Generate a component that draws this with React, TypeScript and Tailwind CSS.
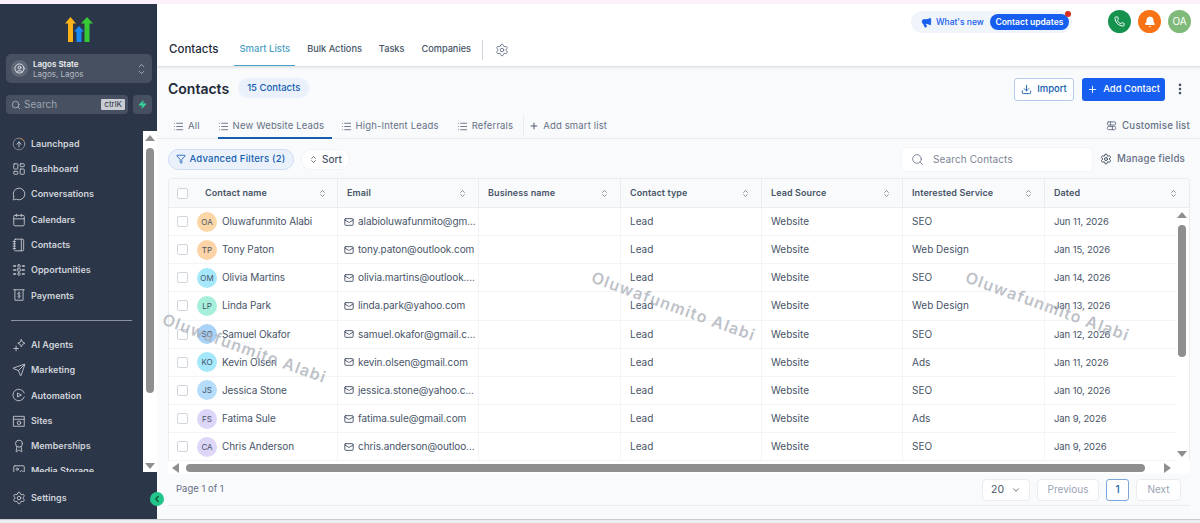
import React from "react";
import {
  Award,
  Bell,
  Calendar,
  ChevronDown,
  ChevronLeft,
  ChevronsUpDown,
  ChevronUp,
  Download,
  Filter,
  Image,
  LayoutDashboard,
  List,
  Mail,
  Megaphone,
  MessageCircle,
  MoreVertical,
  Notebook,
  Phone,
  Plus,
  Search,
  Send,
  Settings,
  UserCircle,
  Zap,
} from "lucide-react";

const font = "font-['Inter','Liberation_Sans',sans-serif]";

type IconProps = { size?: number; strokeWidth?: number; className?: string };

const Svg = ({ size = 15, strokeWidth = 1.5, className, children }: IconProps & { children: React.ReactNode }) => (
  <svg width={size} height={size} viewBox="0 0 24 24" fill="none" stroke="currentColor" strokeWidth={strokeWidth} strokeLinecap="round" strokeLinejoin="round" className={className}>
    {children}
  </svg>
);

const LaunchIcon = (p: IconProps) => (
  <Svg {...p}>
    <circle cx="12" cy="12" r="10" opacity="0.6" />
    <path d="M12 17v-7M8.500 12.500L12 8l3.500 4.500" />
    <path d="M14 2.200a10 10 0 0 1 7 5" stroke="#c77a3a" />
  </Svg>
);

const OpportunitiesIcon = (p: IconProps) => (
  <Svg {...p}>
    <path d="M3 5h3M3 12h3M3 19h3M18 5h3M18 12h3M18 19h3" strokeWidth={2.500} />
    <rect x="10" y="3" width="4" height="4" rx="1" />
    <rect x="9" y="10" width="6" height="4" rx="1" />
    <rect x="10" y="17" width="4" height="4" rx="1" />
  </Svg>
);

const PaymentsIcon = (p: IconProps) => (
  <Svg {...p}>
    <path d="M3 3h18M5 3v18h14V3" />
    <path d="M14.500 9.500c-.5-1-1.500-1.500-2.500-1.500-1.500 0-2.500 1-2.500 2s1 1.700 2.500 2 2.500 1 2.500 2-1 2-2.500 2c-1 0-2-.5-2.500-1.500M12 6.500v11" strokeWidth={1.200} />
  </Svg>
);

const AgentsIcon = (p: IconProps) => (
  <Svg {...p}>
    <path d="M7 14v8M3 18h8" />
    <path d="M16 3l2 4 4 2-4 2-2 4-2-4-4-2 4-2z" />
  </Svg>
);

const AutomationIcon = (p: IconProps) => (
  <Svg {...p}>
    <path d="M21 8.500A10 10 0 1 0 21 15.500" />
    <path d="M10 9l6 3-6 3z" />
  </Svg>
);

const SitesIcon = (p: IconProps) => (
  <Svg {...p}>
    <rect x="3" y="4" width="18" height="17" />
    <path d="M3 9h18" />
    <circle cx="12" cy="15" r="3" />
  </Svg>
);

const ListToggleIcon = (p: IconProps) => (
  <Svg {...p}>
    <rect x="3" y="4" width="18" height="7" rx="2.500" />
    <path d="M10 4v7" />
    <rect x="3" y="14" width="18" height="7" rx="2.500" />
    <path d="M14 14v7" />
  </Svg>
);

const navTop = [
  { label: "Launchpad", icon: LaunchIcon },
  { label: "Dashboard", icon: LayoutDashboard },
  { label: "Conversations", icon: MessageCircle },
  { label: "Calendars", icon: Calendar },
  { label: "Contacts", icon: Notebook },
  { label: "Opportunities", icon: OpportunitiesIcon },
  { label: "Payments", icon: PaymentsIcon },
];

const navBottom = [
  { label: "AI Agents", icon: AgentsIcon },
  { label: "Marketing", icon: Send },
  { label: "Automation", icon: AutomationIcon },
  { label: "Sites", icon: SitesIcon },
  { label: "Memberships", icon: Award },
  { label: "Media Storage", icon: Image },
];

const rows = [
  { init: "OA", avatar: "bg-[#fbd7a8]", name: "Oluwafunmito Alabi", email: "alabioluwafunmito@gm...", service: "SEO", date: "Jun 11, 2026" },
  { init: "TP", avatar: "bg-[#fbd3a6]", name: "Tony Paton", email: "tony.paton@outlook.com", service: "Web Design", date: "Jan 15, 2026" },
  { init: "OM", avatar: "bg-[#a5e8fb]", name: "Olivia Martins", email: "olivia.martins@outlook....", service: "SEO", date: "Jan 14, 2026" },
  { init: "LP", avatar: "bg-[#a6f0db]", name: "Linda Park", email: "linda.park@yahoo.com", service: "Web Design", date: "Jan 13, 2026" },
  { init: "SO", avatar: "bg-[#a9d2f8]", name: "Samuel Okafor", email: "samuel.okafor@gmail.c...", service: "SEO", date: "Jan 12, 2026" },
  { init: "KO", avatar: "bg-[#a5e8fb]", name: "Kevin Olsen", email: "kevin.olsen@gmail.com", service: "Ads", date: "Jan 11, 2026" },
  { init: "JS", avatar: "bg-[#b5dcfa]", name: "Jessica Stone", email: "jessica.stone@yahoo.c...", service: "SEO", date: "Jan 10, 2026" },
  { init: "FS", avatar: "bg-[#ddd6f9]", name: "Fatima Sule", email: "fatima.sule@gmail.com", service: "Ads", date: "Jan 9, 2026" },
  { init: "CA", avatar: "bg-[#ddd6f9]", name: "Chris Anderson", email: "chris.anderson@outloo...", service: "SEO", date: "Jan 9, 2026" },
];

const headers = ["Email", "Business name", "Contact type", "Lead Source", "Interested Service", "Dated"];

const SortIcon = () => <ChevronsUpDown size={9} className="text-[#667085] shrink-0" strokeWidth={2} />;

const Logo = () => (
  <svg width="28" height="25" viewBox="0 0 28 25">
    <path d="M5.500 0L11 6.500H8V25H3V6.500H0z" fill="#fbb216" />
    <path d="M22 0l6 6.500h-3.500V25h-5V6.500H16z" fill="#37ca37" />
    <path d="M14 9l5 5.500h-2.500V25h-5V14.500H9z" fill="#188bf6" />
  </svg>
);

const NavItem = ({ label, icon: Icon }: { label: string; icon: React.ElementType }) => (
  <div className="flex items-center gap-[5px] h-[25.3px] pl-[12px] shrink-0">
    <Icon size={14} strokeWidth={1.5} className="text-[#c8ccd4] shrink-0" />
    <span className="text-[9px] font-semibold text-[#cfd3da] whitespace-nowrap">{label}</span>
  </div>
);

const Sidebar = () => (
  <aside className="relative w-[157px] shrink-0 bg-[#2b3648] flex flex-col">
    <div className="flex justify-center pt-[13px] h-[50px] shrink-0">
      <Logo />
    </div>
    <div className="ml-[6px] mr-[5px] h-[29px] rounded-[5px] bg-[#465061] flex items-center pl-[5px] pr-[6px] gap-[5px] shrink-0">
      <div className="w-[17px] h-[17px] rounded-full bg-[#5e6776] flex items-center justify-center">
        <UserCircle size={11} className="text-[#e5e7eb]" />
      </div>
      <div className="flex-1 leading-[10px]">
        <div className="text-[8px] font-semibold text-[#eef0f3]">Lagos State</div>
        <div className="text-[8px] text-[#b5bac3]">Lagos, Lagos</div>
      </div>
      <div className="flex flex-col text-[#c8ccd4] -space-y-[2px]">
        <ChevronUp size={9} />
        <ChevronDown size={9} />
      </div>
    </div>
    <div className="ml-[6px] mr-[5px] mt-[12px] flex gap-[5px] shrink-0">
      <div className="flex-1 h-[19px] rounded-[4px] bg-[#465061] flex items-center pl-[5px] pr-[3px] gap-[3px]">
        <Search size={10} className="text-[#aeb3bc]" />
        <span className="flex-1 text-[10px] text-[#9ca3af]">Search</span>
        <span className="bg-[#c9ccd2] rounded-[1px] px-[3px] text-[8px] leading-[11px] text-[#2b3648]">ctrlK</span>
      </div>
      <div className="w-[19px] h-[19px] rounded-[4px] bg-[#465061] flex items-center justify-center">
        <Zap size={9} className="text-[#37d39a] fill-[#37d39a]" />
      </div>
    </div>
    <div className="flex-1 flex mt-[17px] min-h-0">
      <nav className="flex-1 min-w-0 overflow-hidden">
        <div className="flex flex-col">
          {navTop.map((item) => (
            <NavItem key={item.label} {...item} />
          ))}
        </div>
        <div className="mx-[11px] mt-[12px] mb-[11px] h-px bg-[#8b93a1]" />
        <div className="flex flex-col">
          {navBottom.map((item) => (
            <NavItem key={item.label} {...item} />
          ))}
        </div>
      </nav>
      <div className="w-[14px] bg-white flex flex-col items-center pt-[4px] pb-[3px] shrink-0">
        <div className="w-0 h-0 border-x-[5px] border-x-transparent border-b-[6px] border-b-[#8f8f8f]" />
        <div className="w-[8px] h-[245px] mt-[7px] rounded-full bg-[#8f8f8f]" />
        <div className="flex-1" />
        <div className="w-0 h-0 border-x-[5px] border-x-transparent border-t-[6px] border-t-[#8f8f8f]" />
      </div>
    </div>
    <div className="h-[47px] flex items-start pt-[13px] shrink-0">
      <NavItem label="Settings" icon={Settings} />
    </div>
    <div className="absolute right-[-7px] top-[488px] w-[14px] h-[14px] rounded-full bg-[#22c58b] flex items-center justify-center">
      <ChevronLeft size={10} strokeWidth={3} className="text-[#14532d]" />
    </div>
  </aside>
);

const TopBar = () => (
  <header className="h-[63px] shrink-0 bg-white border-b border-[#dfe3e8] shadow-[0_1px_2px_rgba(16,24,40,0.08)] relative z-10 flex flex-col">
    <div className="flex justify-end items-start pt-[6px] pr-[9px] h-[35px] shrink-0">
      <div className="relative mt-[1px] h-[22px] w-[161px] rounded-full bg-[#f0f4fb] flex items-center pl-[10px] pr-[3px]">
        <Megaphone size={11} className="text-[#155eef] fill-[#155eef]" />
        <span className="ml-[4px] text-[8.500px] font-medium text-[#155eef] whitespace-nowrap">What's new</span>
        <span className="ml-[6px] h-[16px] w-[79px] rounded-full bg-[#155eef] text-center text-[8.500px] leading-[16px] font-semibold text-white whitespace-nowrap">
          Contact updates
        </span>
        <span className="absolute right-[1px] top-0 w-[6px] h-[6px] rounded-full bg-[#d92d20]" />
      </div>
      <div className="ml-[36px] flex gap-[7px]">
        <span className="w-[23px] h-[23px] rounded-full bg-[#16924f] flex items-center justify-center">
          <Phone size={11} className="text-white" />
        </span>
        <span className="w-[23px] h-[23px] rounded-full bg-[#f97316] flex items-center justify-center">
          <Bell size={12} className="text-white fill-white" />
        </span>
        <span className="w-[23px] h-[23px] rounded-full bg-[#7fba7a] flex items-center justify-center text-[10px] text-white">
          OA
        </span>
      </div>
    </div>
    <div className="flex-1 flex items-start pl-[12px]">
      <span className="text-[11.500px] font-medium text-[#1d2939] leading-[20px] mr-[16px]">Contacts</span>
      <div className="h-[27px] px-[5px] border-b border-[#4d9fc5] text-[9.500px] font-medium text-[#4d9fc5] leading-[20px]">Smart Lists</div>
      <div className="ml-[12px] text-[9.200px] font-medium text-[#475467] leading-[20px]">Bulk Actions</div>
      <div className="ml-[17px] text-[9.200px] font-medium text-[#475467] leading-[20px]">Tasks</div>
      <div className="ml-[17px] text-[9.200px] font-medium text-[#475467] leading-[20px]">Companies</div>
      <div className="ml-[11px] mt-[1px] w-px h-[20px] bg-[#d0d5dd]" />
      <Settings size={14} strokeWidth={1.5} className="ml-[12px] mt-[4px] text-[#667085]" />
    </div>
  </header>
);

const Tab = ({ label, active, className }: { label: string; active?: boolean; className?: string }) => (
  <div className={`h-[28px] pt-[5px] flex items-center gap-[4px] border-b-2 ${active ? "border-[#155eaf]" : "border-transparent"} ${className ?? ""}`}>
    <List size={11} className="text-[#667085] shrink-0" />
    <span className="text-[9.500px] text-[#667085] tracking-[0.15px] whitespace-nowrap">{label}</span>
  </div>
);

const Toolbar = () => (
  <>
    <div className="flex items-center justify-between h-[44px] pl-[11px] pr-[13px] shrink-0">
      <div className="flex items-center pb-[2px]">
        <span className="text-[14px] font-semibold text-[#1d2939]">Contacts</span>
        <span className="ml-[9px] h-[20px] px-[9px] rounded-full bg-[#eaf1fb] text-[#155eaf] text-[9.500px] font-medium leading-[20px]">15 Contacts</span>
      </div>
      <div className="flex items-center">
        <button className="h-[23px] w-[60px] rounded-[3px] border border-[#b2ccf0] bg-white flex items-center justify-center gap-[5px] text-[9.500px] font-medium text-[#155eaf]">
          <Download size={11} /> Import
        </button>
        <button className="ml-[8px] h-[23px] w-[83px] rounded-[3px] bg-[#155eef] flex items-center justify-center gap-[5px] text-[9.500px] font-medium text-white">
          <Plus size={11} /> Add Contact
        </button>
        <MoreVertical size={14} strokeWidth={2.500} className="ml-[8px] text-[#475467]" />
      </div>
    </div>
    <div className="flex items-center justify-between h-[28px] border-b border-[#eaecf0] pl-[16px] pr-[10px] shrink-0">
      <div className="flex items-center">
        <Tab label="All" />
        <Tab label="New Website Leads" active className="ml-[18px] w-[114px]" />
        <Tab label="High-Intent Leads" className="ml-[9px]" />
        <Tab label="Referrals" className="ml-[18px]" />
        <div className="ml-[10px] mt-[3px] h-[22px] border-l border-[#eaecf0] pl-[5px] flex items-center gap-[4px]">
          <Plus size={10} className="text-[#344054]" />
          <span className="text-[9.500px] text-[#667085] tracking-[0.15px] whitespace-nowrap">Add smart list</span>
        </div>
      </div>
      <div className="pt-[3px] flex items-center gap-[5px] text-[9.700px] font-medium text-[#667085] tracking-[0.2px]">
        <ListToggleIcon size={11} strokeWidth={2} /> Customise list
      </div>
    </div>
    <div className="flex items-center justify-between h-[39px] pt-[1px] pl-[11px] pr-[15px] shrink-0">
      <div className="flex items-center gap-[7px]">
        <div className="h-[21px] w-[126px] rounded-full border border-[#cfdcf2] bg-[#eaf1fb] flex items-center justify-center gap-[3px]">
          <Filter size={10} className="text-[#155eaf]" />
          <span className="text-[9.500px] font-medium text-[#155eaf] tracking-[0.2px]">Advanced Filters (2)</span>
        </div>
        <div className="h-[21px] w-[49px] rounded-full bg-white border border-[#f2f4f7] flex items-center justify-center gap-[4px] text-[10px] font-medium text-[#475467]">
          <ChevronsUpDown size={9} /> Sort
        </div>
      </div>
      <div className="flex items-center">
        <div className="h-[25px] w-[192px] rounded-[4px] bg-white border border-[#f2f4f7] flex items-center pl-[9px] gap-[9px]">
          <Search size={13} strokeWidth={1.5} className="text-[#667085]" />
          <span className="text-[10px] text-[#7b8494] tracking-[0.1px]">Search Contacts</span>
        </div>
        <div className="ml-[7px] flex items-center gap-[5px] text-[9.700px] font-medium text-[#667085] tracking-[0.2px]">
          <Settings size={12} className="text-[#475467]" /> Manage fields
        </div>
      </div>
    </div>
  </>
);

const Checkbox = () => <span className="block w-[11px] h-[11px] rounded-[2px] border border-[#d0d5dd] bg-white shrink-0" />;

const cols = "grid grid-cols-[169px_141px_142px_141px_141px_142px_1fr]";

const ContactsTable = () => (
  <div className="ml-[11px] mr-[10px] relative h-[283px] shrink-0 rounded-t-[4px] border-t border-x border-[#eaecf0] bg-white overflow-hidden">
    <div className={`${cols} h-[29px] bg-[#f9fafb] border-b border-[#eaecf0]`}>
      <div className="flex items-center pl-[8px] pr-[10px] border-r border-[#eaecf0]">
        <Checkbox />
        <span className="ml-[17px] flex-1 text-[9px] font-semibold text-[#475467] tracking-[0.1px]">Contact name</span>
        <SortIcon />
      </div>
      {headers.map((h, i) => (
        <div key={h} className={`flex items-center pl-[9px] pr-[11px] ${i < 5 ? "border-r border-[#eaecf0]" : ""}`}>
          <span className="flex-1 text-[9px] font-semibold text-[#475467] tracking-[0.1px] whitespace-nowrap">{h}</span>
          <SortIcon />
        </div>
      ))}
    </div>
    {rows.map((r) => (
      <div key={r.name} className={`${cols} h-[28.15px] border-b border-[#f2f4f7] text-[10px] text-[#475467]`}>
        <div className="flex items-center pl-[8px] border-r border-[#f2f4f7]">
          <Checkbox />
          <span className={`ml-[9px] w-[20px] h-[20px] rounded-full ${r.avatar} flex items-center justify-center text-[8px] text-[#475467]`}>{r.init}</span>
          <span className="ml-[5px] tracking-[-0.1px] whitespace-nowrap">{r.name}</span>
        </div>
        <div className="flex items-center pl-[6px] gap-[4px] border-r border-[#f2f4f7]">
          <Mail size={10} className="text-[#344054] shrink-0" />
          <span className="tracking-[-0.08px] whitespace-nowrap">{r.email}</span>
        </div>
        <div className="border-r border-[#f2f4f7]" />
        <div className="flex items-center pl-[9px] border-r border-[#f2f4f7]">Lead</div>
        <div className="flex items-center pl-[9px] border-r border-[#f2f4f7]">Website</div>
        <div className="flex items-center pl-[9px] border-r border-[#f2f4f7]">{r.service}</div>
        <div className="flex items-center pl-[9px] pt-[1px] text-[9.500px] tracking-[-0.1px]">{r.date}</div>
      </div>
    ))}
    <div className="absolute right-0 top-[29px] bottom-0 w-[14px] bg-white flex flex-col items-center pt-[4px] pb-[4px]">
      <div className="w-0 h-0 border-x-[5px] border-x-transparent border-b-[6px] border-b-[#8f8f8f]" />
      <div className="w-[8px] h-[132px] mt-[7px] rounded-full bg-[#8f8f8f]" />
      <div className="flex-1" />
      <div className="w-0 h-0 border-x-[5px] border-x-transparent border-t-[6px] border-t-[#8f8f8f]" />
    </div>
  </div>
);

const Watermark = ({ className }: { className: string }) => (
  <span className={`absolute z-20 rotate-[20deg] text-[16px] font-semibold tracking-[1.200px] text-[#a8adb5]/75 whitespace-nowrap ${className}`}>
    Oluwafunmito Alabi
  </span>
);

export default function App() {
  return (
    <div className={`${font} relative w-[1200px] h-[523px] overflow-hidden bg-white flex flex-col`}>
      <div className="h-[4px] bg-[#fdf2fb] shrink-0" />
      <div className="flex-1 flex min-h-0">
        <Sidebar />
        <main className="flex-1 min-w-0 flex flex-col bg-[#f8fafc]">
          <TopBar />
          <Toolbar />
          <ContactsTable />
          <div className="ml-[11px] mr-[10px] h-[13px] bg-white flex items-center shrink-0 pl-[4px]">
            <div className="w-0 h-0 border-y-[5px] border-y-transparent border-r-[7px] border-r-[#8f8f8f]" />
            <div className="ml-[7px] w-[959px] h-[8px] rounded-full bg-[#8f8f8f]" />
            <div className="ml-[19px] w-0 h-0 border-y-[5px] border-y-transparent border-l-[7px] border-l-[#8f8f8f]" />
          </div>
          <div className="ml-[11px] mr-[10px] h-[32px] border-b border-[#eaecf0] flex items-center justify-between pl-[8px] pr-[9px] shrink-0">
            <span className="text-[9.500px] text-[#667085]">Page 1 of 1</span>
            <div className="flex items-center">
              <div className="h-[22px] w-[48px] rounded-[4px] bg-white border border-[#eaecf0] flex items-center justify-center gap-[7px] text-[10.500px] text-[#475467]">
                20 <ChevronDown size={10} />
              </div>
              <div className="ml-[7px] h-[22px] w-[62px] rounded-[4px] border border-[#eaecf0] bg-white flex items-center justify-center text-[10px] text-[#98a2b3]">Previous</div>
              <div className="ml-[7px] h-[22px] w-[23px] rounded-[3px] border border-[#7aa7d9] bg-white flex items-center justify-center text-[10px] font-medium text-[#155eaf]">1</div>
              <div className="ml-[7px] h-[22px] w-[45px] rounded-[4px] border border-[#eaecf0] bg-white flex items-center justify-center text-[10px] text-[#98a2b3]">Next</div>
            </div>
          </div>
          <div className="flex-1" />
        </main>
      </div>
      <div className="h-[4px] bg-[#eceef0] border-t border-[#c9ccd0] shrink-0" />
      <Watermark className="left-[158px] top-[336px]" />
      <Watermark className="left-[587px] top-[294px]" />
      <Watermark className="left-[961px] top-[294px]" />
    </div>
  );
}
